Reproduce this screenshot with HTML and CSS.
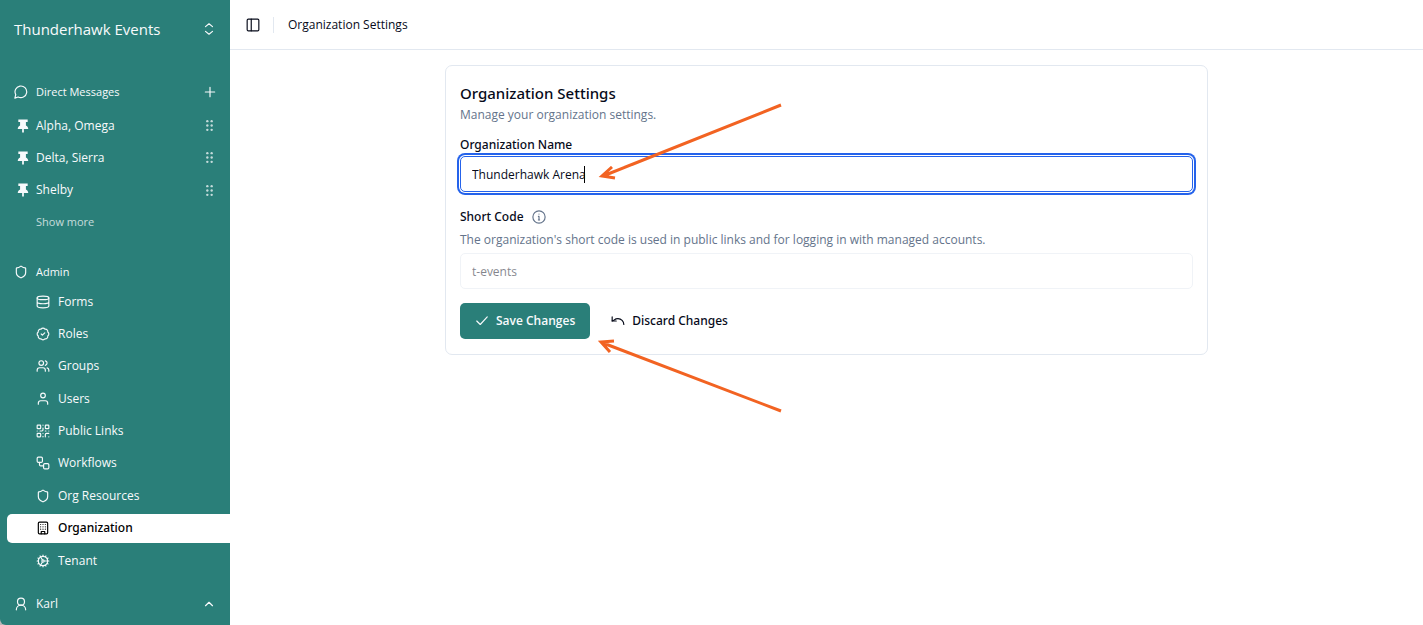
FILE: index.html
```html
<!DOCTYPE html>
<html lang="en">
<head>
<meta charset="utf-8">
<meta name="viewport" content="width=device-width, initial-scale=1">
<title>Organization Settings</title>
<link rel="stylesheet" href="styles.css">
</head>
<body>
<svg class="sprite" aria-hidden="true">
  <symbol id="pin" viewBox="0 0 24 24"><path fill="currentColor" stroke="none" d="M4 1h16v4h-3v6c2 1 4 2.500 4 6h-7.500v6h-3v-6H3c0-3.500 2-5 4-6V5H4z"/></symbol>
  <symbol id="grip" viewBox="0 0 24 24"><g fill="currentColor" stroke="none"><circle cx="8" cy="4" r="2.200"/><circle cx="8" cy="12" r="2.200"/><circle cx="8" cy="20" r="2.200"/><circle cx="16" cy="4" r="2.200"/><circle cx="16" cy="12" r="2.200"/><circle cx="16" cy="20" r="2.200"/></g></symbol>
  <symbol id="shield" viewBox="0 0 24 24"><path d="M20 13c0 5-3.500 7.500-7.660 8.950a1 1 0 0 1-.67-.01C7.500 20.500 4 18 4 13V6a1 1 0 0 1 1-1c2 0 4.500-1.200 6.240-2.720a1.170 1.170 0 0 1 1.520 0C14.510 3.810 17 5 19 5a1 1 0 0 1 1 1z"/></symbol>
</svg>
<div class="app">
  <aside class="sidebar">
    <button class="switcher" type="button">
      <span>Thunderhawk Events</span>
      <svg class="icon" viewBox="0 0 24 24"><path d="m6 16 6 5 6-5M6 8l6-5 6 5"/></svg>
    </button>
    <nav class="nav">
      <section class="section">
        <div class="heading">
          <svg class="icon" viewBox="0 0 24 24"><path d="M7 20.500A10 10 0 1 0 3 16.500L1.500 22.500Z"/></svg>
          <h2>Direct Messages</h2>
          <button class="icon-button" type="button" aria-label="New message"><svg class="icon" viewBox="0 0 24 24"><path d="M4 12h16M12 4v16"/></svg></button>
        </div>
        <ul class="list messages">
          <li class="message"><a href="#"><svg class="icon pin"><use href="#pin"/></svg>Alpha, Omega</a><svg class="icon grip"><use href="#grip"/></svg></li>
          <li class="message"><a href="#"><svg class="icon pin"><use href="#pin"/></svg>Delta, Sierra</a><svg class="icon grip"><use href="#grip"/></svg></li>
          <li class="message"><a href="#"><svg class="icon pin"><use href="#pin"/></svg>Shelby</a><svg class="icon grip"><use href="#grip"/></svg></li>
          <li class="message"><button class="more" type="button">Show more</button></li>
        </ul>
      </section>
      <section class="section">
        <div class="heading">
          <svg class="icon"><use href="#shield"/></svg>
          <h2>Admin</h2>
        </div>
        <ul class="list admin">
          <li><a class="item" href="#"><svg class="icon" viewBox="0 0 24 24"><ellipse cx="12" cy="5" rx="10" ry="3"/><path d="M2 5v14a10 3 0 0 0 20 0V5M2 12a10 3 0 0 0 20 0"/></svg>Forms</a></li>
          <li><a class="item" href="#"><svg class="icon" viewBox="0 0 24 24"><path d="M3.850 8.620a4 4 0 0 1 4.780-4.770 4 4 0 0 1 6.740 0 4 4 0 0 1 4.780 4.780 4 4 0 0 1 0 6.740 4 4 0 0 1-4.770 4.780 4 4 0 0 1-6.750 0 4 4 0 0 1-4.780-4.770 4 4 0 0 1 0-6.760Z"/><path d="m9 12 2 2 4-4"/></svg>Roles</a></li>
          <li><a class="item" href="#"><svg class="icon" viewBox="0 0 24 24"><path d="M16 21v-2a4 4 0 0 0-4-4H6a4 4 0 0 0-4 4v2M22 21v-2a4 4 0 0 0-3-3.870M16 3.130a4 4 0 0 1 0 7.750"/><circle cx="9" cy="7" r="4"/></svg>Groups</a></li>
          <li><a class="item" href="#"><svg class="icon" viewBox="0 0 24 24"><path d="M20 21v-2a4 4 0 0 0-4-4H8a4 4 0 0 0-4 4v2"/><circle cx="12" cy="6" r="4"/></svg>Users</a></li>
          <li><a class="item" href="#"><svg class="icon" viewBox="0 0 24 24"><rect width="6" height="6" x="2" y="2" rx="1"/><rect width="6" height="6" x="16" y="2" rx="1"/><rect width="6" height="6" x="2" y="16" rx="1"/><path d="M22 16h-4a2 2 0 0 0-2 2v4M22 22v.01M12 7v3a2 2 0 0 1-2 2H7M2 12h.01M12 2h.01M12 16v.01M16 12h1M22 12v.01M12 22v-1"/></svg>Public Links</a></li>
          <li><a class="item" href="#"><svg class="icon" viewBox="0 0 24 24"><rect width="9" height="9" x="2" y="2" rx="2"/><path d="M6 11v4a2 2 0 0 0 2 2h5"/><rect width="9" height="9" x="13" y="13" rx="2"/></svg>Workflows</a></li>
          <li><a class="item" href="#"><svg class="icon"><use href="#shield"/></svg>Org Resources</a></li>
          <li><a class="item current" href="#" aria-current="page"><svg class="icon" viewBox="0 0 24 24"><rect width="16" height="20" x="4" y="2" rx="2"/><path d="M9 22v-4h6v4M8 6h.01M16 6h.01M12 6h.01M12 10h.01M12 14h.01M16 10h.01M16 14h.01M8 10h.01M8 14h.01"/></svg>Organization</a></li>
          <li><a class="item" href="#"><svg class="icon" viewBox="0 0 24 24"><path d="M12 20a8 8 0 1 0 0-16 8 8 0 0 0 0 16Z"/><path d="M12 14a2 2 0 1 0 0-4 2 2 0 0 0 0 4ZM12 2v2M12 22v-2M17 20.660l-1-1.730M11 10.270 7 3.340M20.660 17l-1.730-1M3.340 7l1.730 1M14 12h8M2 12h2M20.660 7l-1.730 1M3.340 17l1.730-1M17 3.340l-1 1.730M11 13.730l-4 6.930"/></svg>Tenant</a></li>
        </ul>
      </section>
    </nav>
    <button class="account" type="button">
      <svg class="icon" viewBox="0 0 24 24"><circle cx="12" cy="8" r="6"/><path d="M20 22a8 8 0 0 0-16 0"/></svg>
      <span>Karl</span>
      <svg class="icon" viewBox="0 0 24 24"><path d="m6 15 6-6 6 6"/></svg>
    </button>
  </aside>
  <div class="page">
    <header class="topbar">
      <button class="icon-button" type="button" aria-label="Toggle sidebar"><svg class="icon" viewBox="0 0 24 24"><rect width="20" height="20" x="2" y="2" rx="2"/><path d="M9 2v20"/></svg></button>
      <span class="crumb">Organization Settings</span>
    </header>
    <main class="main">
      <form class="card">
        <h1>Organization Settings</h1>
        <p class="hint">Manage your organization settings.</p>
        <label class="label name-label" for="name">Organization Name</label>
        <input class="field active" id="name" type="text" value="Thunderhawk Arena">
        <div class="label-row">
          <label class="label" for="code">Short Code</label>
          <svg class="icon info" viewBox="0 0 24 24"><circle cx="12" cy="12" r="10.500"/><path d="M12 17v-6h-1M12 7h.01M11 17h2"/></svg>
        </div>
        <p class="hint">The organization's short code is used in public links and for logging in with managed accounts.</p>
        <input class="field" id="code" type="text" value="t-events" disabled>
        <div class="actions">
          <button class="button primary" type="submit"><svg class="icon" viewBox="0 0 24 24"><path d="M21 5 9 18l-6-6"/></svg>Save Changes</button>
          <button class="button" type="button"><svg class="icon" viewBox="0 0 24 24"><path d="M2 5v7h7"/><path d="M22 18a10 10 0 0 0-10-10 10 10 0 0 0-6.500 2.300L2 12"/></svg>Discard Changes</button>
        </div>
        <svg class="arrows" viewBox="0 0 350 360" aria-hidden="true"><path d="M335 39 157 110M166 101l-10 9 13 2M335 345 157 277M168 275l-13 1 9 10"/></svg>
      </form>
    </main>
  </div>
</div>
</body>
</html>
```
FILE: styles.css
```css
:root {
  --teal: #2a7f79;
  --ink: #070b1a;
  --muted: #64748b;
  --line: #e2e8f0;
  --blue: #2563eb;
  --medium: "Noto Sans", "Open Sans", sans-serif;
}

* { box-sizing: border-box; }

body {
  margin: 0;
  background: #fff;
  color: var(--ink);
  font: 12px/20px "Open Sans", "Noto Sans", sans-serif;
}

h1, h2, p, ul { margin: 0; padding: 0; }
ul { list-style: none; }
a { color: inherit; text-decoration: none; }

button {
  padding: 0;
  border: 0;
  background: none;
  color: inherit;
  font: inherit;
  text-align: left;
  cursor: pointer;
}

.sprite { position: absolute; width: 0; height: 0; }

.icon {
  flex: none;
  width: 14px;
  height: 14px;
  fill: none;
  stroke: currentColor;
  stroke-width: 2;
  stroke-linecap: round;
  stroke-linejoin: round;
}

.icon-button { display: flex; }

.app { display: flex; min-height: 100vh; }

.sidebar {
  display: flex;
  flex: none;
  flex-direction: column;
  width: 230px;
  border-bottom-left-radius: 6px;
  background: var(--teal);
  box-shadow: -6px 6px 0 #b8b8b8;
  color: #f8fafc;
}

.switcher {
  display: flex;
  align-items: center;
  justify-content: space-between;
  height: 58px;
  padding: 0 14px;
  font-size: 15px;
}

.nav { flex: 1; }
.section { padding-top: 19px; }
.section + .section { padding-top: 20px; }

.heading, .account {
  display: flex;
  align-items: center;
  gap: 8px;
  height: 29px;
  padding: 0 13px 0 14px;
}

.heading h2 { flex: 1; font-size: 11px; font-weight: 400; }

.list {
  display: flex;
  flex-direction: column;
  justify-content: space-between;
}

.messages { height: 126px; margin-top: 5px; }
.admin { height: 288px; margin-top: 1px; padding-left: 7px; }

.message {
  display: flex;
  align-items: center;
  justify-content: space-between;
  height: 29px;
  padding: 0 14px 0 16px;
}

.message a { display: flex; align-items: center; gap: 6px; }
.grip { width: 13px; height: 13px; opacity: 0.75; }
.more { padding-left: 20px; font-size: 11px; opacity: 0.75; }

.item {
  display: flex;
  align-items: center;
  gap: 8px;
  height: 29px;
  padding-left: 29px;
  border-radius: 5px 0 0 5px;
}

.item.current {
  background: #fff;
  color: #000;
  font-family: var(--medium);
  font-weight: 500;
}

.account { margin-bottom: 7px; padding-right: 14px; }
.account span { flex: 1; }

.page { flex: 1; min-width: 0; }

.topbar {
  display: flex;
  align-items: center;
  gap: 13px;
  height: 50px;
  padding: 0 16px;
  border-bottom: 1px solid var(--line);
}

.crumb::before {
  display: inline-block;
  height: 16px;
  margin-right: 14px;
  border-left: 1px solid var(--line);
  vertical-align: middle;
  content: "";
}

.main { padding: 15px; }

.card {
  position: relative;
  max-width: 763px;
  margin: 0 auto;
  padding: 16px 14px 15px;
  border: 1px solid var(--line);
  border-radius: 7px;
}

.card h1 {
  font-family: var(--medium);
  font-size: 15px;
  font-weight: 500;
  line-height: 22px;
}

.hint { margin-top: 1px; color: var(--muted); line-height: 20px; }

.label {
  display: block;
  font-family: var(--medium);
  font-weight: 500;
  line-height: 20px;
}

.name-label { margin-top: 10px; }

.field {
  display: block;
  width: 100%;
  height: 36px;
  margin-top: 1px;
  padding: 0 11px;
  border: 1px solid var(--line);
  border-radius: 5px;
  outline: none;
  background: #fff;
  color: var(--ink);
  font: inherit;
}

.field.active {
  border-color: var(--blue);
  background: linear-gradient(#000, #000) 123px 50% / 1px 17px no-repeat #fff;
  box-shadow: 0 0 0 1px #fff, 0 0 0 3px var(--blue);
}

.field:disabled { margin-top: 3px; opacity: 0.5; }

.label-row { display: flex; align-items: center; gap: 8px; margin-top: 15px; }
.label-row + .hint { margin-top: 3px; }
.info { color: var(--muted); }

.actions { display: flex; gap: 6px; margin-top: 14px; }

.button {
  display: flex;
  align-items: center;
  gap: 7px;
  height: 36px;
  padding: 0 15px;
  border-radius: 5px;
  font-family: var(--medium);
  font-weight: 500;
}

.button.primary {
  background: var(--teal);
  color: #f8fafc;
  font-family: inherit;
  font-weight: 600;
}

.arrows {
  position: absolute;
  top: 0;
  left: 0;
  width: 350px;
  height: 360px;
  fill: none;
  stroke: #f26322;
  stroke-width: 3;
  pointer-events: none;
}
```
